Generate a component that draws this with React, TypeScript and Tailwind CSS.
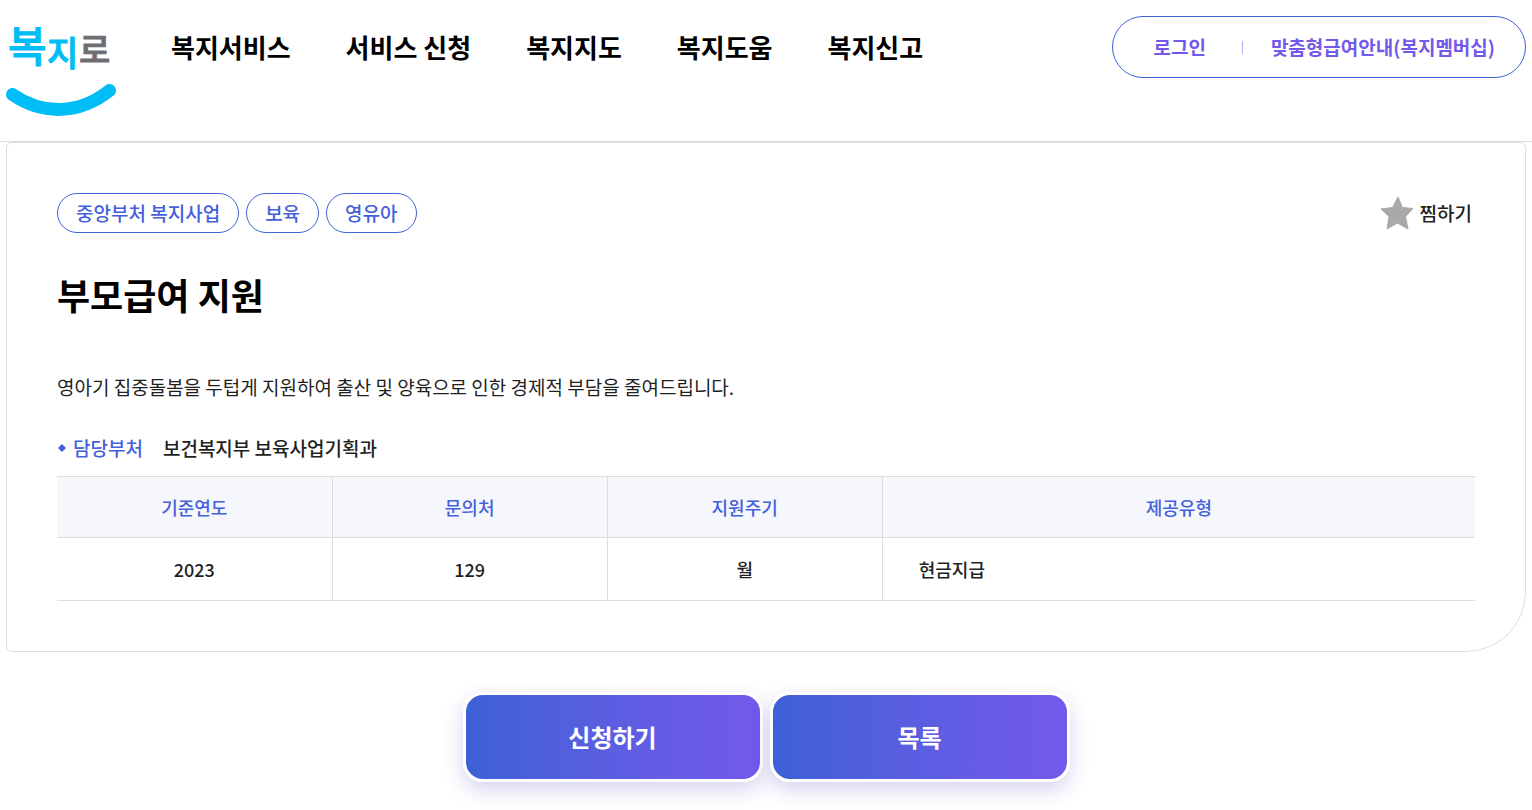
const menu = ['복지서비스', '서비스 신청', '복지지도', '복지도움', '복지신고'];
const tags = ['중앙부처 복지사업', '보육', '영유아'];
const columns = ['기준연도', '문의처', '지원주기', '제공유형'];

function Logo() {
  return (
    <svg
      className="h-[102px] w-[110px] overflow-visible"
      viewBox="0 0 110 102"
      role="img"
      aria-label="복지로"
      strokeLinejoin="round"
    >
      <text x="2" y="48" fontSize="42" fontWeight="500" fill="#00bdf6" stroke="#00bdf6" strokeWidth="1">복</text>
      <text x="41" y="52" fontSize="34" fontWeight="500" fill="#00bdf6" stroke="#00bdf6" strokeWidth="1">지</text>
      <text x="73" y="49" fontSize="34" fontWeight="500" fill="#6d6e73" stroke="#6d6e73" strokeWidth="1">로</text>
      <path d="M6.500 80.500C36 101 73 101 103.500 76.500" fill="none" stroke="#00bdf6" strokeWidth="13" strokeLinecap="round" />
    </svg>
  );
}

function Header() {
  return (
    <header className="flex h-[142px] items-start border-b border-[#dddddd] px-1.5 pt-3.5">
      <a href="#home" className="block shrink-0">
        <Logo />
      </a>
      <nav className="ml-[55px] flex gap-[55px] pt-3.5 text-[26px] leading-[38px] font-bold whitespace-nowrap text-black">
        {menu.map((item) => (
          <a key={item} href="#menu">{item}</a>
        ))}
      </nav>
      <div className="mt-0.5 ml-auto flex h-[62px] shrink-0 items-center rounded-[31px] border border-[#3f62d7] pr-[30px] pl-10 text-[19px] font-bold whitespace-nowrap text-[#7359eb]">
        <a href="#login">로그인</a>
        <span className="mr-7 ml-9 h-[13px] w-px bg-[#b9acf5]" />
        <a href="#membership">맞춤형급여안내(복지멤버십)</a>
      </div>
    </header>
  );
}

function ServiceTable() {
  return (
    <table className="mt-3.5 w-full table-fixed border-collapse border-y border-[#dddddd] text-center text-[18px]">
      <colgroup>
        <col className="w-[19.4%]" />
        <col className="w-[19.4%]" />
        <col className="w-[19.4%]" />
        <col />
      </colgroup>
      <thead>
        <tr className="h-[61px] border-b border-[#dddddd] bg-[#f6f7fc] text-[#4560dc]">
          {columns.map((name) => (
            <th key={name} scope="col" className="border-r border-[#dddddd] font-medium last:border-r-0">{name}</th>
          ))}
        </tr>
      </thead>
      <tbody>
        <tr className="h-[63px] font-medium">
          <td className="border-r border-[#dddddd]">2023</td>
          <td className="border-r border-[#dddddd]">129</td>
          <td className="border-r border-[#dddddd]">월</td>
          <td className="pl-9 text-left">현금지급</td>
        </tr>
      </tbody>
    </table>
  );
}

export default function App() {
  return (
    <div className="min-h-screen overflow-x-hidden bg-white font-['Noto_Sans_CJK_KR','Noto_Sans_KR',sans-serif] text-[#1f1f1f]">
      <Header />
      <main>
        <section className="mx-1.5 rounded-[6px] rounded-br-[60px] border border-[#dddddd] px-[50px] pt-[50px] pb-[50px]">
          <div className="flex items-center justify-between">
            <ul className="flex gap-[7px] text-[19px] font-medium text-[#4560dc]">
              {tags.map((tag) => (
                <li key={tag} className="flex h-10 items-center rounded-[20px] border border-[#3f62d7] px-[18px]">{tag}</li>
              ))}
            </ul>
            <button type="button" className="flex items-center gap-[7px] pr-[3px] text-[19px] font-medium">
              <svg className="h-[34px] w-8" viewBox="0 0 32 34" aria-hidden="true">
                <path d="M17 1 21.500 11.500 32 12.500 24.500 20.500 27 33 16.500 27 6 33 8 20.500 0 13 11.500 11.500Z" fill="#a9a9a9" stroke="#a9a9a9" strokeLinejoin="round" />
              </svg>
              찜하기
            </button>
          </div>
          <h1 className="mt-[34px] text-[36px] leading-[54px] font-bold text-black">부모급여 지원</h1>
          <p className="mt-[52px] text-[19px] leading-7">
            영아기 집중돌봄을 두텁게 지원하여 출산 및 양육으로 인한 경제적 부담을 줄여드립니다.
          </p>
          <dl className="mt-[33px] flex items-center text-[19px] leading-7 font-medium">
            <dt className="flex items-center gap-1.5 text-[#4560dc]">
              <svg className="size-2.5" viewBox="0 0 10 10" aria-hidden="true">
                <path d="M5 1 9 5 5 9 1 5Z" fill="#4560dc" />
              </svg>
              담당부처
            </dt>
            <dd className="ml-5">보건복지부 보육사업기획과</dd>
          </dl>
          <ServiceTable />
        </section>
        <div className="flex justify-center gap-[7px] pt-10 pb-7 text-[24px] font-bold text-white">
          <button type="button" className="h-[90px] w-[300px] rounded-[20px] border-[3px] border-white bg-linear-to-r from-[#3c61d7] to-[#7459ec] bg-origin-border shadow-[0_8px_20px_rgba(70,60,180,0.22)]">
            신청하기
          </button>
          <button type="button" className="h-[90px] w-[300px] rounded-[20px] border-[3px] border-white bg-linear-to-r from-[#3c61d7] to-[#7459ec] bg-origin-border shadow-[0_8px_20px_rgba(70,60,180,0.22)]">
            목록
          </button>
        </div>
      </main>
    </div>
  );
}
